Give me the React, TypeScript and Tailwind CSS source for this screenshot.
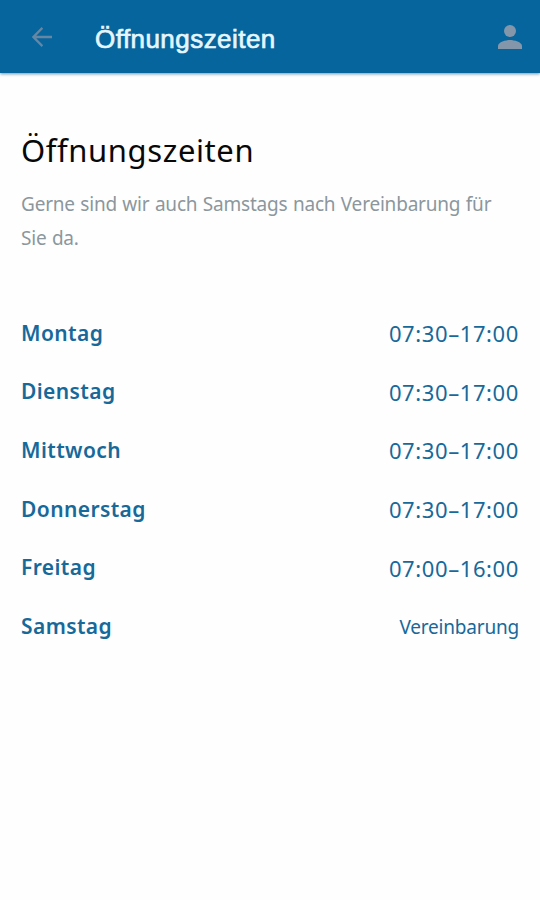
import React from 'react';

const days = [
  { name: 'Montag', hours: '07:30–17:00' },
  { name: 'Dienstag', hours: '07:30–17:00' },
  { name: 'Mittwoch', hours: '07:30–17:00' },
  { name: 'Donnerstag', hours: '07:30–17:00' },
  { name: 'Freitag', hours: '07:00–16:00' },
  { name: 'Samstag', hours: 'Vereinbarung', note: true },
];

function AppBar() {
  return (
    <header className="flex h-[73px] items-center bg-[#07659d] pr-[18px] pl-[28px] shadow-[0_1px_3px_rgba(7,80,130,0.6)]">
      <button aria-label="Zurück" className="flex h-7 w-7 items-center justify-center">
        <svg viewBox="0 0 24 24" className="mt-px h-[30px] w-[30px] shrink-0 fill-[#6687a4]">
          <path d="M20 11H7.4l5.5-5.6L11.7 4 3.8 12l7.9 8 1.2-1.4L7.4 13H20z" />
        </svg>
      </button>
      <span className="mt-[4px] ml-[39px] font-['Liberation_Sans',sans-serif] text-[26px] leading-8 tracking-[0.45px] text-[#e4f6ff] [-webkit-text-stroke:0.7px_#e4f6ff]">
        Öffnungszeiten
      </span>
      <button aria-label="Profil" className="ml-auto">
        <svg viewBox="0 0 24 24" className="mt-px h-6 w-6 fill-[#8496a9]">
          <circle cx="12" cy="6" r="6" />
          <path d="M0 24v-3c0-4 8-6 12-6s12 2 12 6v3z" />
        </svg>
      </button>
    </header>
  );
}

export default function App() {
  return (
    <div className="min-h-[900px] bg-[#fefefe] font-['Noto_Sans',sans-serif]">
      <AppBar />
      <main className="px-[21px] pt-[57px]">
        <h1 className="text-[31px] leading-10 tracking-[0.6px] text-[#080808]">Öffnungszeiten</h1>
        <p className="mt-[17px] text-[19px] leading-[34px] tracking-[-0.2px] text-[#8b979d] [word-spacing:0.7px]">
          Gerne sind wir auch Samstags nach Vereinbarung für
          <br />
          Sie da.
        </p>
        <ul className="mt-[49px]">
          {days.map((day) => (
            <li key={day.name} className="flex h-[58.7px] items-center justify-between text-[#17699a]">
              <span className="text-[21px] font-semibold tracking-[0.4px]">{day.name}</span>
              <span className={day.note ? 'text-[19px] tracking-[-0.2px]' : 'text-[22px] tracking-[0.6px]'}>
                {day.hours}
              </span>
            </li>
          ))}
        </ul>
      </main>
    </div>
  );
}
